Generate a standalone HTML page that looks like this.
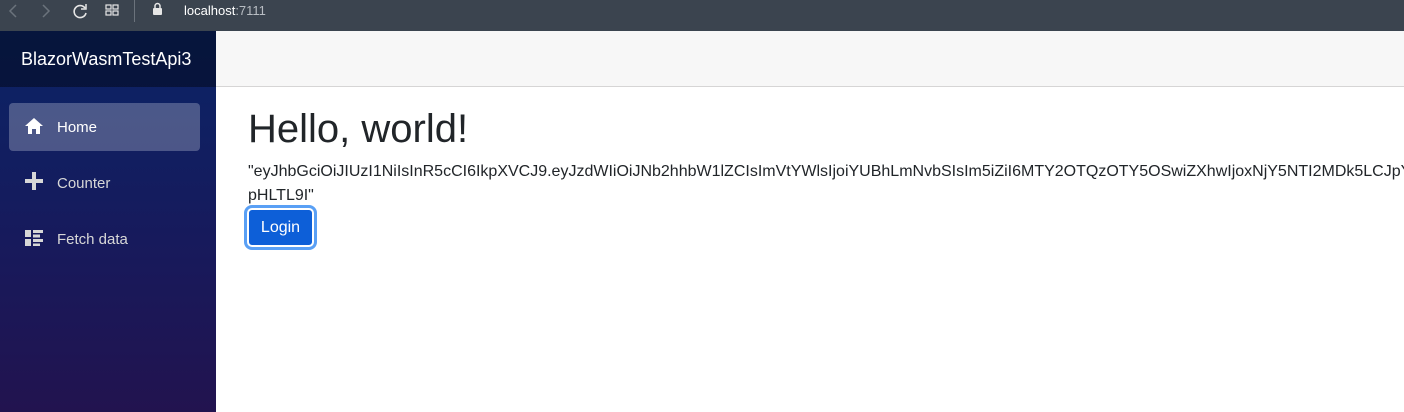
<!DOCTYPE html>
<html><head><style>
*{box-sizing:border-box;margin:0;padding:0}
body{width:1404px;height:412px;overflow:hidden;font-family:"Liberation Sans",Arial,sans-serif;background:#fff;position:relative}
.bar{position:absolute;left:0;top:0;width:1404px;height:31px;background:#3b444f;color:#fff}
.side{position:absolute;left:0;top:31px;width:216px;height:381px;background:linear-gradient(180deg,#0a2466 0%,#171a5c 55%,#22134f 100%)}
.brand{height:56px;background:rgba(0,0,0,0.4);color:#fff;font-size:18px;padding-left:21px;line-height:56px}
.nav{position:absolute;left:9px;width:191px;height:48px;border-radius:4px;color:#d7d7d7;font-size:15px;line-height:50px;padding-left:48px}
.nav.act{background:rgba(255,255,255,0.25);color:#fff}
.nav svg{position:absolute;left:16px;top:15px}
.top{position:absolute;left:216px;top:31px;width:1188px;height:56px;background:#f7f7f7;border-bottom:1px solid #d6d5d5}
h1{position:absolute;left:248px;top:105px;font-size:40px;font-weight:400;color:#212529;line-height:48px}
.tok{position:absolute;left:248px;top:160px;width:1156px;overflow:hidden;font-size:16px;line-height:24px;color:#212529;white-space:nowrap}
.btn{position:absolute;left:247px;top:208px;width:67px;height:39px;background:#0d5fd8;border:2px solid #fff;box-shadow:0 0 0 3px #5aa0f5;border-radius:5px;color:#fff;font-size:16px;text-align:center;line-height:35px}
</style></head><body>
<div class="bar">
<svg width="270" height="31" style="position:absolute;left:0;top:0">
<path d="M16 5 L10 11 L16 17" stroke="#6b737c" stroke-width="1.5" fill="none"/>
<path d="M43 5 L49 11 L43 17" stroke="#6b737c" stroke-width="1.5" fill="none"/>
<path d="M85 8 A6 6 0 1 0 86 13" stroke="#e6e6e6" stroke-width="1.6" fill="none"/><path d="M86 4 L86 9 L81 9" stroke="#e6e6e6" stroke-width="1.5" fill="none"/>
<g stroke="#e6e6e6" stroke-width="1.2" fill="none"><rect x="106" y="5" width="5" height="4"/><rect x="113" y="5" width="5" height="4"/><rect x="106" y="11" width="5" height="4"/><rect x="113" y="11" width="5" height="4"/></g>
<rect x="134" y="0" width="1" height="22" fill="#6b737c"/>
<rect x="153" y="8" width="9" height="7" rx="1" fill="#e6e6e6"/><path d="M155 8 V6 A2.5 2.5 0 0 1 160 6 V8" stroke="#e6e6e6" stroke-width="1.5" fill="none"/>
</svg>
<div style="position:absolute;left:184px;top:3px;font-size:13px;color:#fff">localhost<span style="color:#b8bdc3">:7111</span></div>
</div>
<div class="side">
<div class="brand">BlazorWasmTestApi3</div>
<div class="nav act" style="top:72px"><svg width="18" height="16"><path d="M9 0 L18 8 H15 V16 H11 V11 H7 V16 H3 V8 H0 Z" fill="#fff"/></svg>Home</div>
<div class="nav" style="top:128px"><svg width="18" height="18" style="top:13px"><path d="M7 0H11V7H18V11H11V18H7V11H0V7H7Z" fill="#d7d7d7"/></svg>Counter</div>
<div class="nav" style="top:184px"><svg width="18" height="16"><g fill="#d7d7d7"><rect x="0" y="0" width="6" height="7"/><rect x="0" y="9" width="6" height="7"/><rect x="8" y="0" width="10" height="3"/><rect x="8" y="4.5" width="7" height="3"/><rect x="8" y="9" width="10" height="3"/><rect x="8" y="13.5" width="7" height="2.5"/></g></svg>Fetch data</div>
</div>
<div class="top"></div>
<h1>Hello, world!</h1>
<div class="tok">"eyJhbGciOiJIUzI1NiIsInR5cCI6IkpXVCJ9.eyJzdWIiOiJNb2hhbW1lZCIsImVtYWlsIjoiYUBhLmNvbSIsIm5iZiI6MTY2OTQzOTY5OSwiZXhwIjoxNjY5NTI2MDk5LCJpYXQiOjE2Njk0Mzk2OTl9<br>pHLTL9I"</div>
<div class="btn">Login</div>
</body></html>
